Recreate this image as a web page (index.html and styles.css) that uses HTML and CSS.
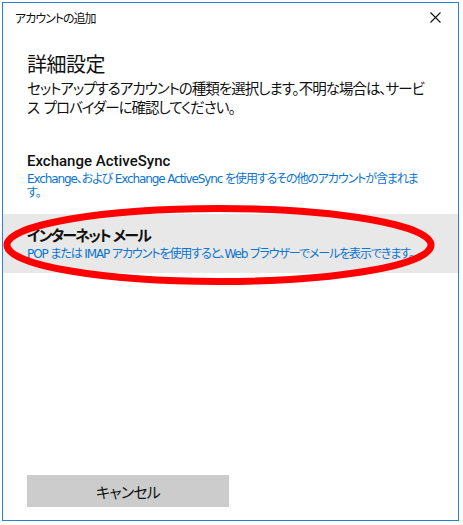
FILE: index.html
```html
<!doctype html>
<html lang="ja">
<head>
    <meta charset="UTF-8">
    <title>アカウントの追加</title>
    <link rel="stylesheet" href="styles.css">
</head>
<body>
<div class="window">
    <div class="titlebar">
        <span class="title">アカウントの追加</span>
        <svg class="close" width="11" height="11" viewBox="0 0 11 11">
            <path d="M0.5 0.5 L10.5 10.5 M10.5 0.5 L0.5 10.5" stroke="#111" stroke-width="1.1" fill="none"/>
        </svg>
    </div>
    <div class="content">
        <h1 class="heading">詳細設定</h1>
        <p class="intro">セットアップするアカウントの種類を選択します。不明な場合は、サービス プロバイダーに確認してください。</p>
    </div>
    <div class="options">
        <div class="option">
            <div class="option-name">Exchange ActiveSync</div>
            <div class="option-desc">Exchange、および Exchange ActiveSync を使用するその他のアカウントが含まれます。</div>
        </div>
        <div class="option selected">
            <div class="option-name ja">インターネット メール</div>
            <div class="option-desc">POP または IMAP アカウントを使用すると、Web ブラウザーでメールを表示できます。</div>
        </div>
    </div>
    <div class="footer">
        <button class="cancel">キャンセル</button>
    </div>
    <svg class="mark" width="440" height="96" viewBox="0 0 440 96">
        <ellipse cx="216" cy="45" rx="212" ry="36.5" fill="none" stroke="#ff0000" stroke-width="7"/>
    </svg>
</div>
</body>
</html>
```

FILE: styles.css
```css
body {
    margin: 0;
    background: #fff;
    font-family: Roboto, "Noto Sans CJK JP", sans-serif;
    color: #111;
    font-feature-settings: "palt";
}
.window {
    position: relative;
    margin: 2px;
    width: 455px;
    height: 517px;
    border: 1px solid #2b7fd0;
    display: flex;
    flex-direction: column;
}
.titlebar {
    height: 29px;
    display: flex;
    align-items: center;
    justify-content: space-between;
    padding: 0 17px 0 12px;
}
.title {
    font-size: 12px;
    letter-spacing: -1px;
}
.close {
    display: block;
}
.content {
    padding: 19px 24px 0 24px;
}
.heading {
    margin: 0;
    font-size: 20px;
    font-weight: normal;
    line-height: 28px;
    letter-spacing: -0.5px;
}
.intro {
    margin: 1px 0 0 0;
    font-size: 14.5px;
    line-height: 19px;
    width: 405px;
    letter-spacing: -1px;
    word-spacing: 2px;
}
.options {
    margin-top: 33px;
}
.option {
    padding: 0 24px;
}
.option-name {
    font-size: 15px;
    font-weight: 500;
    line-height: 20px;
}
.option-name.ja {
    font-weight: 600;
    letter-spacing: -1.8px;
    word-spacing: 1px;
}
.option-desc {
    margin-top: 1px;
    font-family: "DejaVu Sans", "Noto Sans CJK JP", sans-serif;
    font-size: 12px;
    line-height: 14px;
    color: #0a74d0;
    width: 399px;
    letter-spacing: -1.1px;
}
.selected {
    margin-top: 14px;
    background: #e8e8e8;
    padding-top: 12px;
    padding-bottom: 12px;
}
.mark {
    position: absolute;
    left: 0;
    top: 197px;
}
.footer {
    margin-top: auto;
    padding: 0 24px 13px 24px;
}
.cancel {
    display: block;
    width: 202px;
    height: 32px;
    border: none;
    background: #cccccc;
    font-family: "Noto Sans CJK JP", sans-serif;
    font-feature-settings: "palt";
    font-size: 15px;
    letter-spacing: -0.8px;
    color: #111;
}
```
